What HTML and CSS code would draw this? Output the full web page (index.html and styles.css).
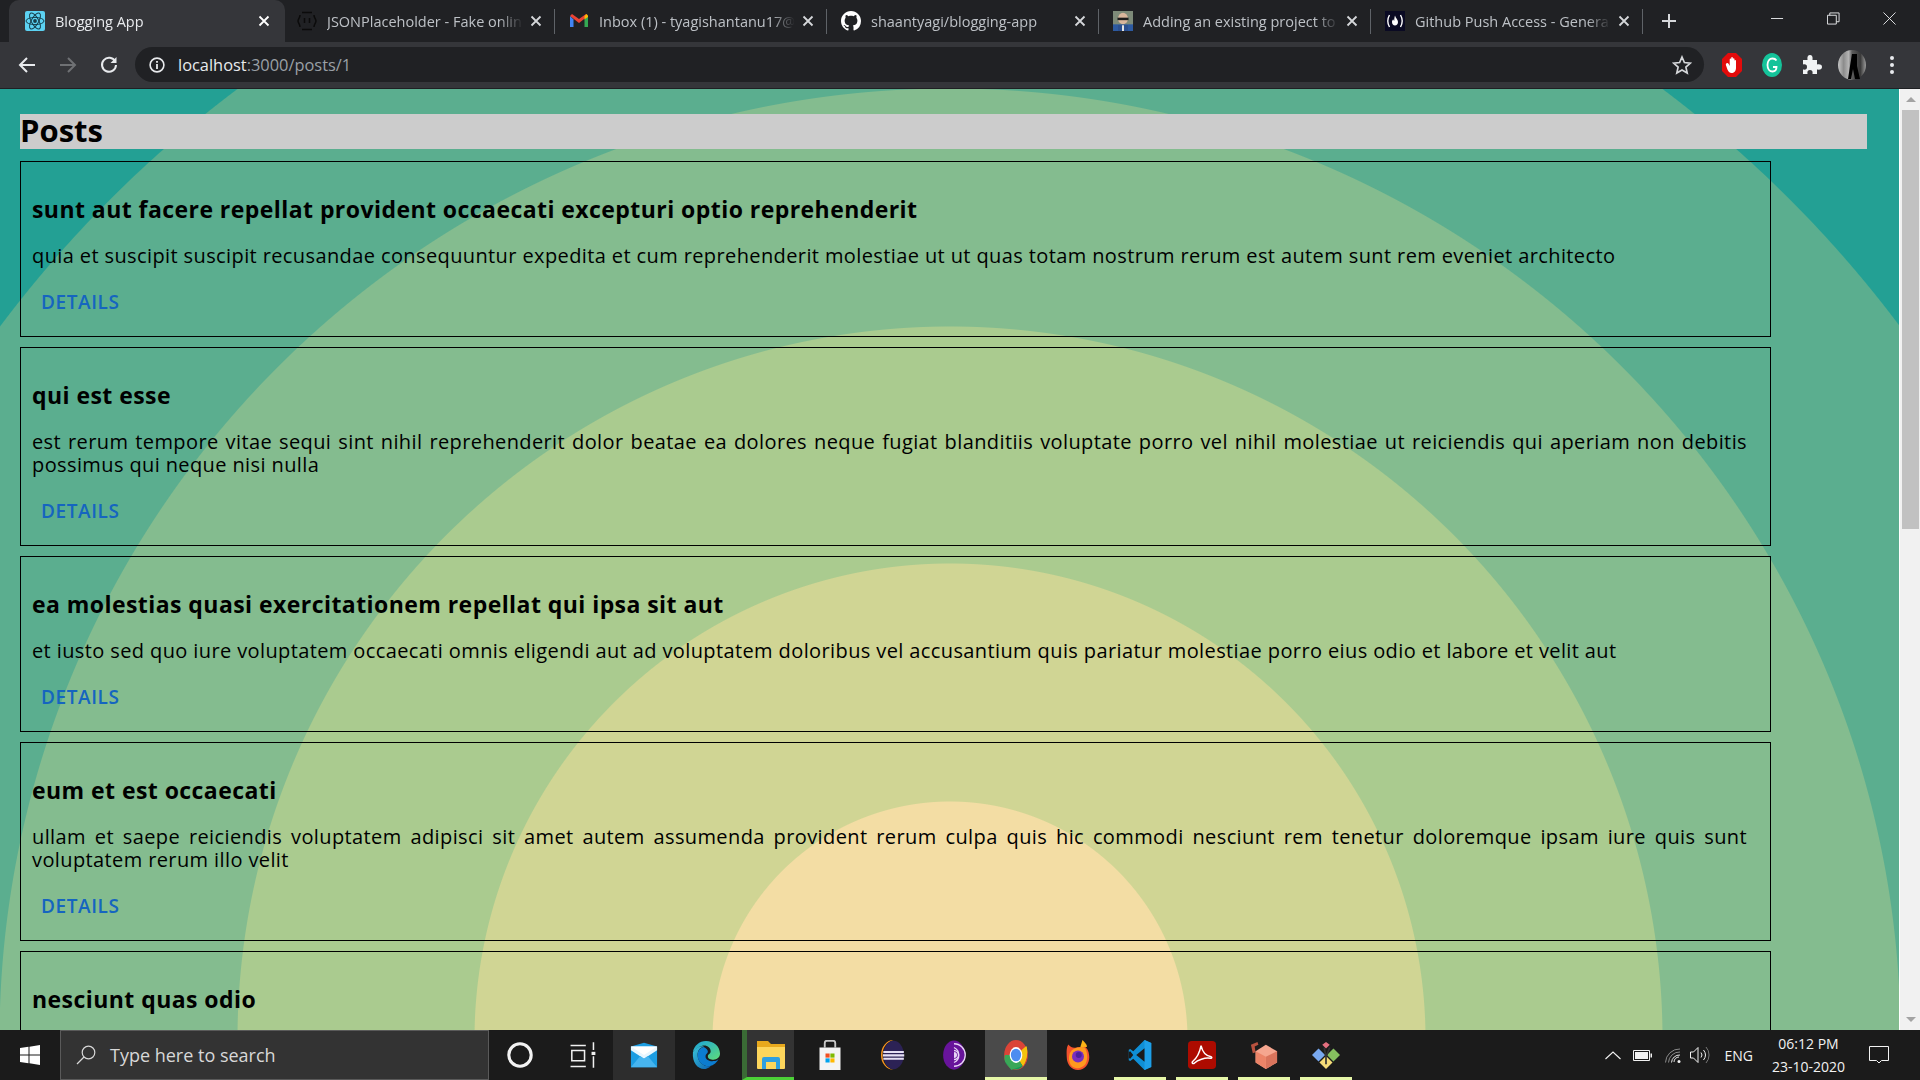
FILE: index.html
```html
<!DOCTYPE html>
<html lang="en">
<head>
    <meta charset="UTF-8">
    <title>Blogging App</title>
    <link rel="stylesheet" href="styles.css">
</head>
<body>
<div class="tabstrip">
    <div class="tab tab-active">
        <svg class="favicon" viewBox="0 0 20 20"><rect width="20" height="20" rx="2" fill="#5cd2f2"/><g fill="none" stroke="#173f4c" stroke-width="1"><ellipse cx="10" cy="10" rx="9" ry="3.6"/><ellipse cx="10" cy="10" rx="9" ry="3.6" transform="rotate(60 10 10)"/><ellipse cx="10" cy="10" rx="9" ry="3.6" transform="rotate(120 10 10)"/></g><circle cx="10" cy="10" r="1.9" fill="#173f4c"/></svg>
        <span class="tab-title">Blogging App</span>
        <svg class="tab-close" viewBox="0 0 12 12"><path d="M1.5 1.5l9 9M10.5 1.5l-9 9"/></svg>
    </div>
    <div class="tab">
        <svg class="favicon" viewBox="0 0 20 20"><g fill="none" stroke="#0b0b0b" stroke-width="1.5"><path d="M5 1.500h10M5 18.500h10M3 4c0 3-2 4-2 6s2 3 2 6M17 4c0 3 2 4 2 6s-2 3-2 6"/><path d="M7.500 7v5M12.500 7v5"/></g></svg>
        <span class="tab-title">JSONPlaceholder - Fake onlin</span>
        <svg class="tab-close" viewBox="0 0 12 12"><path d="M1.5 1.5l9 9M10.5 1.5l-9 9"/></svg>
    </div>
    <div class="tab">
        <svg class="favicon" viewBox="0 0 20 20"><path d="M1 5v11h3.500V8.500z" fill="#4285f4"/><path d="M15.500 8.500V16H19V5z" fill="#34a853"/><path d="M1 5l9 7 9-7-2-2-7 5-7-5-2 2z" fill="#ea4335"/><path d="M15.500 5v3.500L19 6V4.500L17.500 3z" fill="#fbbc04"/></svg>
        <span class="tab-title">Inbox (1) - tyagishantanu17@</span>
        <svg class="tab-close" viewBox="0 0 12 12"><path d="M1.5 1.5l9 9M10.5 1.5l-9 9"/></svg>
    </div>
    <div class="tab">
        <svg class="favicon" viewBox="0 0 16 16"><path fill="#fff" d="M8 0C3.580 0 0 3.580 0 8c0 3.540 2.290 6.530 5.470 7.590.4.070.55-.17.55-.38 0-.19-.01-.82-.01-1.490-2.010.37-2.530-.49-2.690-.94-.09-.23-.48-.94-.82-1.130-.28-.15-.68-.52-.01-.53.63-.01 1.080.58 1.230.82.720 1.210 1.870.87 2.330.66.070-.52.280-.87.510-1.070-1.780-.2-3.640-.89-3.640-3.950 0-.87.310-1.590.820-2.150-.08-.2-.36-1.020.08-2.120 0 0 .67-.21 2.200.82.640-.18 1.320-.27 2-.27s1.360.09 2 .27c1.530-1.040 2.200-.82 2.200-.82.440 1.100.160 1.920.080 2.120.51.560.820 1.270.820 2.150 0 3.070-1.870 3.750-3.650 3.950.29.250.54.730.54 1.480 0 1.070-.01 1.930-.01 2.200 0 .21.150.46.550.38A8.010 8.010 0 0016 8c0-4.420-3.580-8-8-8z"/></svg>
        <span class="tab-title">shaantyagi/blogging-app</span>
        <svg class="tab-close" viewBox="0 0 12 12"><path d="M1.5 1.5l9 9M10.5 1.5l-9 9"/></svg>
    </div>
    <div class="tab">
        <svg class="favicon" viewBox="0 0 20 24" preserveAspectRatio="none"><rect width="20" height="24" fill="#7d8a78"/><rect y="16" width="20" height="8" fill="#2d5aa0"/><ellipse cx="10" cy="9" rx="5" ry="7" fill="#d9b69c"/><path d="M4.500 8h11v3h-11z" fill="#1c1c1c"/><path d="M5 17h10v7H5z" fill="#2b4f8f"/><path d="M9 17h2v7H9z" fill="#e4e4e4"/></svg>
        <span class="tab-title">Adding an existing project to</span>
        <svg class="tab-close" viewBox="0 0 12 12"><path d="M1.5 1.5l9 9M10.5 1.5l-9 9"/></svg>
    </div>
    <div class="tab">
        <svg class="favicon" viewBox="0 0 20 20"><rect width="20" height="20" fill="#0a0a23"/><path d="M4.500 4C2.500 7.500 2.500 12.500 4.500 16M15.500 4c2 3.500 2 8.500 0 12" fill="none" stroke="#fff" stroke-width="1.400"/><path d="M10 4.500c.5 2.500 3 3.800 3 6.500 0 2-1.300 3.500-3 3.500S7 13 7 11c0-1.300.7-2 1.300-2.700.1 1 .5 1.400 1 1.500C9.200 8 9.500 6 10 4.500z" fill="#fff"/></svg>
        <span class="tab-title">Github Push Access - Genera</span>
        <svg class="tab-close" viewBox="0 0 12 12"><path d="M1.5 1.5l9 9M10.5 1.5l-9 9"/></svg>
    </div>
    <svg class="new-tab" viewBox="0 0 16 16"><path d="M8 1v14M1 8h14"/></svg>
    <div class="window-controls">
        <svg viewBox="0 0 14 14"><path d="M0 7h13"/></svg>
        <svg viewBox="0 0 14 14"><path d="M.5 3.500h9.500v9.500H.5zM3 3.500V1h10v9.500h-3"/></svg>
        <svg viewBox="0 0 14 14"><path d="M.5.5l13 13M13.500.5l-13 13"/></svg>
    </div>
</div>

<div class="toolbar">
    <svg class="tool" viewBox="0 0 18 18"><path d="M17 9H2M9 2L2 9l7 7" fill="none" stroke="#e8eaed" stroke-width="2"/></svg>
    <svg class="tool" viewBox="0 0 18 18"><path d="M1 9h15M9 2l7 7-7 7" fill="none" stroke="#6f7174" stroke-width="2"/></svg>
    <svg class="tool" viewBox="0 0 18 18"><path d="M15.200 5.500A7 7 0 1 0 16 9" fill="none" stroke="#e8eaed" stroke-width="2"/><path d="M16.500 1v6h-6z" fill="#e8eaed"/></svg>
    <div class="omnibox">
        <svg class="omni-info" viewBox="0 0 16 16"><circle cx="8" cy="8" r="6.900" fill="none" stroke="#e8eaed" stroke-width="1.600"/><path d="M7.100 7h1.800v5H7.100zM7.100 4h1.800v1.800H7.100z" fill="#e8eaed"/></svg>
        <span class="omni-url">localhost<span class="omni-path">:3000/posts/1</span></span>
        <svg class="omni-star" viewBox="0 0 20 20"><path d="M10 2l2.400 5.500 6 .6-4.500 4 1.300 5.900L10 15l-5.200 3 1.300-5.900-4.500-4 6-.6z" fill="none" stroke="#d5d7da" stroke-width="1.700"/></svg>
    </div>
    <div class="extensions">
        <svg viewBox="0 0 20 24"><path d="M6 0h8l6 6v12l-6 6H6l-6-6V6z" fill="#e30b0b"/><path d="M5.500 10c1.200.5 1.800 2 2.200 3V6.500c0-1.200 1.500-1.200 1.500 0V5c0-1.200 1.700-1.200 1.700 0v1.200c0-1.200 1.600-1.100 1.600 0v1.500c0-1 1.500-1 1.500 0V15c0 3-2 5-4.500 5-3.500 0-4-4-5.500-7.500-.5-1.400.3-2.700 1.500-2.500z" fill="#fff"/></svg>
        <svg viewBox="0 0 20 24"><ellipse cx="10" cy="12" rx="10" ry="12" fill="#15c39a"/><path d="M14.500 7.500C13.500 6 12 5.500 10.500 5.500c-3 0-5 2.800-5 6.500s2 6.500 5 6.500c2 0 4-1.400 4-4.500H11" fill="none" stroke="#fff" stroke-width="1.800"/></svg>
        <svg viewBox="0 0 20 20"><path d="M1 5h4.500C5 1.500 6 0 8 0s3 1.500 2.500 5H15v4.500c3.500-.5 5 .5 5 2.500s-1.500 3-5 2.500V19H10.500c.5-3-.5-4-2.500-4s-3 1-2.500 4H1v-4.500c3 .5 4-.5 4-2.500S4 9 1 9.500z" fill="#f1f3f4"/></svg>
        <svg class="avatar" viewBox="0 0 28 30"><defs><linearGradient id="avatarshade" x1="0" x2="1" y1="0" y2="0"><stop offset="0" stop-color="#c4c4c4"/><stop offset=".2" stop-color="#8c8c8c"/><stop offset=".38" stop-color="#b5b5b5"/><stop offset=".5" stop-color="#5c5c5c"/><stop offset=".8" stop-color="#3a3a3a"/><stop offset="1" stop-color="#9a9a9a"/></linearGradient></defs><ellipse cx="14" cy="15" rx="14" ry="15" fill="url(#avatarshade)"/><path d="M14 4h5v12l3 13h-5l-2-10-2 10H10l2-13z" fill="#000"/></svg>
        <svg viewBox="0 0 20 20"><g fill="#e8eaed"><circle cx="10" cy="3" r="2"/><circle cx="10" cy="10" r="2"/><circle cx="10" cy="17" r="2"/></g></svg>
    </div>
</div>

<div class="viewport">
    <main class="page">
        <h2 class="page-title">Posts</h2>
        <article class="post">
            <h3 class="post-title">sunt aut facere repellat provident occaecati excepturi optio reprehenderit</h3>
            <p class="post-body">quia et suscipit suscipit recusandae consequuntur expedita et cum reprehenderit molestiae ut ut quas totam nostrum rerum est autem sunt rem eveniet architecto</p>
            <a class="details" href="#">Details</a>
        </article>
        <article class="post">
            <h3 class="post-title">qui est esse</h3>
            <p class="post-body">est rerum tempore vitae sequi sint nihil reprehenderit dolor beatae ea dolores neque fugiat blanditiis voluptate porro vel nihil molestiae ut reiciendis qui aperiam non debitis possimus qui neque nisi nulla</p>
            <a class="details" href="#">Details</a>
        </article>
        <article class="post">
            <h3 class="post-title">ea molestias quasi exercitationem repellat qui ipsa sit aut</h3>
            <p class="post-body">et iusto sed quo iure voluptatem occaecati omnis eligendi aut ad voluptatem doloribus vel accusantium quis pariatur molestiae porro eius odio et labore et velit aut</p>
            <a class="details" href="#">Details</a>
        </article>
        <article class="post">
            <h3 class="post-title">eum et est occaecati</h3>
            <p class="post-body">ullam et saepe reiciendis voluptatem adipisci sit amet autem assumenda provident rerum culpa quis hic commodi nesciunt rem tenetur doloremque ipsam iure quis sunt voluptatem rerum illo velit</p>
            <a class="details" href="#">Details</a>
        </article>
        <article class="post">
            <h3 class="post-title">nesciunt quas odio</h3>
        </article>
    </main>
    <div class="scrollbar">
        <svg class="scroll-arrow" viewBox="0 0 10 5"><path d="M5 0l5 5H0z"/></svg>
        <div class="scroll-track"><div class="scroll-thumb"></div></div>
        <svg class="scroll-arrow" viewBox="0 0 10 5"><path d="M0 0h10L5 5z"/></svg>
    </div>
</div>

<div class="taskbar">
    <div class="start">
        <svg viewBox="0 0 20 20"><path d="M0 3l8.500-1.200V9.500H0zM9.500 1.700L20 0v9.500H9.500zM0 10.500h8.500v7.700L0 17zM9.500 10.500H20V20L9.500 18.300z" fill="#fff"/></svg>
    </div>
    <div class="search">
        <svg viewBox="0 0 20 20"><circle cx="12.500" cy="7.500" r="6.300" fill="none" stroke="#d8d8d8" stroke-width="1.200"/><path d="M8 12l-7 7" stroke="#d8d8d8" stroke-width="1.300"/></svg>
        <span>Type here to search</span>
    </div>
    <div class="task-item">
        <svg viewBox="0 0 20 20"><circle cx="10" cy="10" r="8" fill="none" stroke="#f2f2f2" stroke-width="2.200"/></svg>
    </div>
    <div class="task-item">
        <svg viewBox="0 0 22 22"><path d="M2 3.500h12M2 20h12M3 7.500h10v8H3zM20 1v6M20 12v9" fill="none" stroke="#f0f0f0" stroke-width="1.200"/><rect x="18.500" y="8.500" width="3" height="2.500" fill="#f0f0f0"/></svg>
    </div>
    <div class="task-item task-hover">
        <svg viewBox="0 0 30 26"><path d="M1 4l14-4 14 4v22H1z" fill="#1b9de2"/><path d="M1 8l14 9 14-9V4H1z" fill="#e8f6fe"/><path d="M1 4h28L15 13z" fill="#fff"/><path d="M1 26l10-12 4 3 4-3 10 12z" fill="#47b5ef"/></svg>
    </div>
    <div class="task-item">
        <svg viewBox="0 0 30 30"><defs><linearGradient id="edgeblue" x1="0" x2="1" y1="0" y2="1"><stop offset="0" stop-color="#3bc5d8"/><stop offset="1" stop-color="#0a62b5"/></linearGradient><linearGradient id="edgegreen" x1="0" x2="1" y1="0" y2="1"><stop offset="0" stop-color="#1aa3de"/><stop offset="1" stop-color="#5fdc78"/></linearGradient></defs><path d="M15 0c8 0 15 5.500 15 13.500 0 4.500-3.500 6.500-7 6.500-3 0-6-1-6-3.500 0-3 3-2 3-5.500C20 7 16 4 11 5 7 6 3 9 1 12 2 5 8 0 15 0z" fill="url(#edgegreen)"/><path d="M1 12c3-5 8-7 12-6-5 1-7 5-7 9 0 7 6 13 14 12-2 2-5 3-7 3C6 30 0 23 1 12z" fill="url(#edgeblue)"/><path d="M6 15c0-4 2-7 6-8.500 2 .5 5 2.500 5 5 0 2-2.500 2-2.500 5 0 4 5 5.500 9 5 2 0 4-1 5-2.500-1.500 4-5 7-10 8-7 .5-12.500-5-12.500-12z" fill="#0c7cd0"/></svg>
    </div>
    <div class="task-item task-active">
        <svg viewBox="0 0 28 30"><path d="M0 1h11l3 3h14v24H0z" fill="#e8a91d"/><path d="M0 7h28v21a1 1 0 0 1-1 1H1a1 1 0 0 1-1-1z" fill="#fdd65c"/><path d="M5 29V19a2 2 0 0 1 2-2h14a2 2 0 0 1 2 2v10h-4v-7H9v7z" fill="#2f9fe0"/></svg>
    </div>
    <div class="task-item">
        <svg viewBox="0 0 30 40"><path d="M8 10V4a3 3 0 0 1 3-3h8a3 3 0 0 1 3 3v6" fill="none" stroke="#c9c9c9" stroke-width="2.500"/><path d="M1 10h28v30H1z" fill="#f4f4f4"/><path d="M9 18h5.500v5.500H9z" fill="#f25022"/><path d="M15.500 18H21v5.500h-5.500z" fill="#7fba00"/><path d="M9 24.500h5.500V30H9z" fill="#00a4ef"/><path d="M15.500 24.500H21V30h-5.500z" fill="#ffb900"/></svg>
    </div>
    <div class="task-item">
        <svg viewBox="0 0 30 38"><path d="M17 0A16 19 0 0 0 17 38C7 35 3 27 3 19S7 3 17 0z" fill="#f7941e"/><ellipse cx="17" cy="19" rx="13" ry="18" fill="#2c2255"/><path d="M4 14h26v2.500H4zM3.500 18h27v3h-27zM4 22.500h26V25H4z" fill="#e6e1f4"/></svg>
    </div>
    <div class="task-item">
        <svg viewBox="0 0 30 40"><ellipse cx="15" cy="20" rx="14.500" ry="19.500" fill="#68149b"/><g fill="none" stroke="#e7d3f5" stroke-width="1.800"><path d="M15 14a6 6 0 0 1 0 12"/><path d="M15 10a11 11 0 0 1 0 20"/><path d="M15 5a15 15 0 0 1 0 30"/></g><path d="M15 16v8a4 4 0 0 0 0-8z" fill="#e7d3f5"/></svg>
    </div>
    <div class="task-item task-current">
        <svg viewBox="0 0 30 38"><ellipse cx="15" cy="19" rx="15" ry="19" fill="#db4437"/><path d="M15 19L28 8c2 3.500 2 17-4.500 25L15 19z" fill="#f4c20d"/><path d="M15 19l8.500 14C18 40 6 39 1 27l14-8z" fill="#0f9d58"/><path d="M15 19H1C0 22 .3 25 1 27l8 11 14-5z" fill="#3aa757"/><path d="M15 19l13-11c2 4 2 15-4 25z" fill="#f4c20d"/><ellipse cx="15" cy="19" rx="8" ry="10" fill="#fff"/><ellipse cx="15" cy="19" rx="6.500" ry="8" fill="#4d8df0"/></svg>
    </div>
    <div class="task-item">
        <svg viewBox="0 0 30 40"><path d="M21 0c3 3 6 6 6 9l-10 4z" fill="#fcb316"/><path d="M2 6c-3 5-2 12-2 17 0 9 6 17 15 17s15-8 15-17c0-6-2-12-6-14-2 2-8 0-11 1-5 1-7 0-11-4z" fill="#f5532d"/><path d="M4 18c3-7 11-9 20-8 3 5 5 14 1 22-4 6-14 8-19 2C3 30 2 24 4 18z" fill="#ff9a1f"/><circle cx="15" cy="22" r="8" fill="#7a2fbe"/><circle cx="16" cy="20" r="4" fill="#4c1f9e"/></svg>
    </div>
    <div class="task-item task-open">
        <svg viewBox="0 0 30 40"><path d="M21 0l9 4v32l-9 4-15-15-4 3-2-1v-14l2-1 4 3z" fill="#0f8fd6"/><path d="M21 0v40l9-4V4z" fill="#1e9fe8"/><path d="M21 11L10 20l11 9zM2 15l4 5-4 5-2-1V16z" fill="#1b1b1b"/></svg>
    </div>
    <div class="task-item task-open">
        <svg viewBox="0 0 30 30"><rect width="30" height="30" rx="4" fill="#ad0b00"/><path d="M14 5c-1 5-4 13-9 17-1.500 1.500.5 3 2 1.500 3-3 11-6 17-5 2 .3 2-1.500 0-2-4-.6-8-2.500-10-11.500z" fill="none" stroke="#fff" stroke-width="1.600"/></svg>
    </div>
    <div class="task-item task-open">
        <svg viewBox="0 0 30 30"><path d="M1 4l7-3 1 3-4 2 1 6-3 1z" fill="#b9523f"/><path d="M17 4l12 7v12l-12 7-11-7V11z" fill="#f5a68f"/><path d="M17 17l12-6v12l-12 7z" fill="#d9745c"/><path d="M17 17L6 11v12l11 7z" fill="#ec8468"/></svg>
    </div>
    <div class="task-item task-open">
        <svg viewBox="0 0 30 30"><path d="M11 4l4-3 4 3-4 4z" fill="#e5707f"/><path d="M0 15l7-7 7 7-7 7z" fill="#79a9f0"/><path d="M16 15l7-7 7 7-7 7z" fill="#85bf5f"/><path d="M8 23l7-7 7 7-7 7z" fill="#f5dc78"/><path d="M13 7l2 10M19 7l-4 10M15 17v8" fill="none" stroke="#333" stroke-width="1.800"/></svg>
    </div>
    <div class="tray">
        <svg class="tray-chevron" viewBox="0 0 16 9"><path d="M.5 8L8 1l7.500 7" fill="none" stroke="#f2f2f2" stroke-width="1.100"/></svg>
        <svg class="tray-battery" viewBox="0 0 19 11"><path d="M.5.5h16v10H.5z" fill="none" stroke="#f2f2f2"/><path d="M2 2h13v7H2zM17.500 3.500H19v4h-1.500z" fill="#f2f2f2"/></svg>
        <svg class="tray-wifi" viewBox="0 0 16 15"><g fill="none" stroke="#8a8a8a"><path d="M.5 14.500A14 14 0 0 1 15 1"/><path d="M3.500 14.500A11 11 0 0 1 15 4"/></g><path d="M6.500 14.500A8 8 0 0 1 15 7M9 14A5 5 0 0 1 14 9" fill="none" stroke="#e8e8e8"/><circle cx="14" cy="13.500" r="1.500" fill="#f2f2f2"/></svg>
        <svg class="tray-volume" viewBox="0 0 20 18"><path d="M.5 6h3L8 1.500v15L3.500 12h-3z" fill="none" stroke="#f2f2f2"/><path d="M11 6.500a4 4 0 0 1 0 5M13.500 4a8 8 0 0 1 0 10" fill="none" stroke="#f2f2f2"/><path d="M16 1a12 12 0 0 1 0 16" fill="none" stroke="#777"/></svg>
        <span class="tray-lang">ENG</span>
        <div class="clock"><span>06:12 PM</span><span>23-10-2020</span></div>
        <svg class="tray-notify" viewBox="0 0 20 18"><path d="M.5.5h19v14h-7L10 17l-2.500-2.500h-7z" fill="none" stroke="#f2f2f2"/></svg>
    </div>
</div>
</body>
</html>
```

FILE: styles.css
```css
* {
    box-sizing: border-box;
}

body {
    margin: 0;
    width: 1920px;
    height: 1080px;
    overflow: hidden;
    display: flex;
    flex-direction: column;
    font-family: "Open Sans", sans-serif;
    background: #202124;
}

/* browser tabs */
.tabstrip {
    height: 42px;
    display: flex;
    align-items: center;
    padding-left: 11px;
    background: #202124;
}

.tab {
    width: 272px;
    height: 25px;
    display: flex;
    align-items: center;
    padding-left: 14px;
    border-right: 1px solid #5f6368;
    color: #bdc1c6;
    font-size: 14.500px;
}

.tab-active {
    width: 276px;
    height: 42px;
    margin: 0 -2px;
    padding-left: 16px;
    border-right: none;
    border-radius: 10px 10px 0 0;
    background: #35363a;
    color: #e8eaed;
}

.favicon {
    width: 20px;
    height: 20px;
    flex-shrink: 0;
    margin-right: 10px;
}

.tab-title {
    width: 200px;
    white-space: nowrap;
    overflow: hidden;
    -webkit-mask-image: linear-gradient(to right, #000 86%, transparent 98%);
    mask-image: linear-gradient(to right, #000 86%, transparent 98%);
}

.tab-close {
    width: 12px;
    height: 12px;
    margin-left: 3px;
    fill: none;
    stroke: #d5d7da;
    stroke-width: 1.800;
}

.tab-active .tab-close {
    stroke: #fff;
}

.new-tab {
    width: 16px;
    height: 16px;
    margin-left: 18px;
    stroke: #d5d7da;
    stroke-width: 2;
}

.window-controls {
    margin-left: auto;
    display: flex;
    align-items: center;
    gap: 43px;
    padding: 0 24px 6px 0;
}

.window-controls svg {
    width: 13px;
    height: 13px;
    fill: none;
    stroke: #e8eaed;
    stroke-width: 1;
}

/* address bar row */
.toolbar {
    height: 47px;
    display: flex;
    align-items: center;
    gap: 23px;
    padding: 0 0 1px 18px;
    background: #35363a;
    border-bottom: 1px solid #1f2023;
}

.tool {
    width: 18px;
    height: 18px;
}

.omnibox {
    width: 1569px;
    height: 35px;
    display: flex;
    align-items: center;
    margin-left: -6px;
    padding: 0 12px 0 14px;
    border-radius: 18px;
    background: #202124;
}

.omni-info {
    width: 16px;
    height: 16px;
    margin-right: 13px;
}

.omni-url {
    color: #e8eaed;
    font-size: 16.400px;
}

.omni-path {
    color: #9aa0a6;
}

.omni-star {
    width: 20px;
    height: 20px;
    margin-left: auto;
}

.extensions {
    display: flex;
    align-items: center;
    gap: 20px;
    margin-left: -5px;
}

.extensions svg {
    width: 20px;
    height: 24px;
}

.extensions .avatar {
    width: 28px;
    height: 30px;
    margin: 0 -4px;
}

/* page area */
.viewport {
    height: 941px;
    display: flex;
}

.page {
    flex: 1;
    overflow: hidden;
    padding: 25px 32px 0 20px;
    background: radial-gradient(circle at 950px 950px,
        #f3dda4 237px, #d0d594 238px 475px, #aacb8f 476px 712px,
        #84bc8f 713px 950px, #5bae8f 951px 1187px, #23a094 1188px);
}

.page-title {
    height: 35px;
    margin: 0 0 12px;
    background: #ccc;
    color: #000;
    font-size: 31px;
    line-height: 33px;
}

.post {
    width: 1751px;
    margin-bottom: 10px;
    padding: 33px 23px 16px 11px;
    border: 1px solid #000;
    color: #000;
}

.post-title {
    margin: 0 0 21px;
    font-size: 23px;
    letter-spacing: .44px;
    line-height: 28px;
}

.post-body {
    margin: 0 0 17px;
    font-size: 20px;
    letter-spacing: .39px;
    line-height: 23px;
    text-align: justify;
}

.details {
    display: inline-block;
    height: 36px;
    padding: 0 9px;
    color: #1565c0;
    font-size: 19px;
    font-weight: 600;
    letter-spacing: .6px;
    line-height: 36px;
    text-decoration: none;
    text-transform: uppercase;
}

.scrollbar {
    width: 21px;
    display: flex;
    flex-direction: column;
    align-items: center;
    padding-left: 1px;
    background: #f1f1f1;
    border-left: 1px solid #fff;
}

.scroll-arrow {
    width: 10px;
    height: 5px;
    margin: 8px 0;
    fill: #a3a3a3;
}

.scroll-track {
    flex: 1;
    width: 17px;
}

.scroll-thumb {
    height: 419px;
    background: #c1c1c1;
}

/* windows taskbar */
.taskbar {
    height: 50px;
    display: flex;
    align-items: stretch;
    background: #1b1b1b;
}

.start {
    width: 60px;
    display: flex;
    align-items: center;
    justify-content: center;
}

.start svg {
    width: 20px;
    height: 20px;
}

.search {
    width: 429px;
    display: flex;
    align-items: center;
    gap: 14px;
    padding-left: 15px;
    background: #333;
    border: 1px solid #5a5a5a;
    color: #d8d8d8;
    font-size: 18px;
}

.search svg {
    width: 20px;
    height: 20px;
}

.task-item {
    width: 62px;
    display: flex;
    align-items: center;
    justify-content: center;
}

.task-item svg {
    width: 28px;
    height: 30px;
}

.task-hover {
    background: #2d2d2d;
}

.task-active {
    width: 52px;
    margin: 0 5px;
    background: #333;
    border-bottom: 3px solid #4cd137;
    border-left: 5px solid #3a6b35;
    padding-top: 3px;
}

.task-current {
    background: #4a4a4a;
    border-bottom: 3px solid #e6f7a8;
    padding-top: 3px;
}

.task-open {
    width: 52px;
    margin: 0 5px;
    border-bottom: 3px solid #e6f7a8;
    padding-top: 3px;
}

.tray {
    margin-left: auto;
    display: flex;
    align-items: center;
    color: #f2f2f2;
    font-size: 14px;
}

.tray-chevron {
    width: 16px;
    height: 9px;
    margin-right: 12px;
}

.tray-battery {
    width: 19px;
    height: 11px;
    margin-right: 13px;
}

.tray-wifi {
    width: 16px;
    height: 15px;
    margin-right: 9px;
}

.tray-volume {
    width: 20px;
    height: 18px;
    margin-right: 15px;
}

.tray-lang {
    margin-right: 13px;
}

.clock {
    width: 85px;
    display: flex;
    flex-direction: column;
    align-items: center;
    gap: 3px;
    line-height: 20px;
}

.tray-notify {
    width: 20px;
    height: 18px;
    margin: 0 31px 0 18px;
}
```
